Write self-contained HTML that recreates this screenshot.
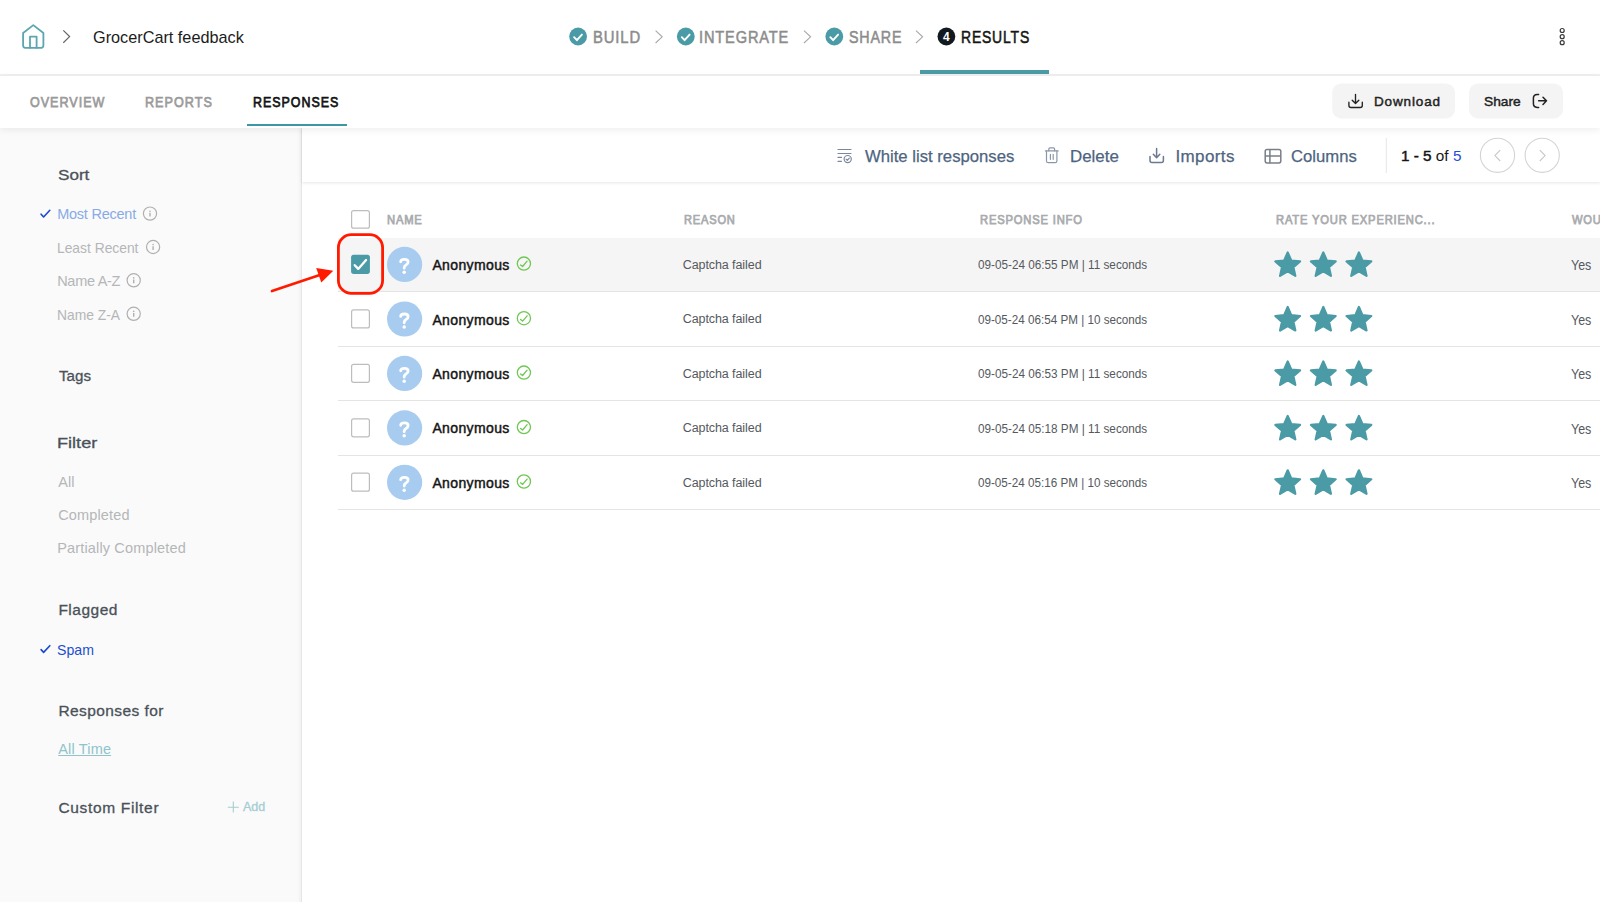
<!DOCTYPE html>
<html><head><meta charset="utf-8"><style>
html,body{margin:0;padding:0}
body{width:1600px;height:902px;overflow:hidden;position:relative;background:#fff;font-family:"Liberation Sans",sans-serif}
.t{position:absolute;white-space:nowrap;font-family:"Liberation Sans",sans-serif}
.ov{position:absolute;left:0;top:0}
</style></head><body>
<div style="position:absolute;left:0;top:74px;width:1600px;height:2px;background:#f0f0f0"></div>
<div style="position:absolute;left:920px;top:70px;width:128.5px;height:4px;background:#4a9ba5"></div>
<div style="position:absolute;left:0;top:128px;width:301px;height:774px;background:#fafafa;border-right:1px solid #e6e6e6;box-shadow:inset -5px 0 5px -5px rgba(0,0,0,0.07)"></div>
<div style="position:absolute;left:302px;top:128px;width:1298px;height:54px;background:#fff;box-shadow:0 1px 3px rgba(0,0,0,0.10)"></div>
<div style="position:absolute;left:0;top:76px;width:1600px;height:52px;background:#fff;box-shadow:0 2px 7px rgba(0,0,0,0.07)"></div>
<div style="position:absolute;left:247px;top:124px;width:100px;height:2px;background:#3d97a3"></div>
<div style="position:absolute;left:338px;top:238px;width:1262px;height:53px;background:#f5f5f5"></div><div style="position:absolute;left:338px;top:291px;width:1262px;height:1px;background:#e4e4e4"></div><div style="position:absolute;left:338px;top:346px;width:1262px;height:1px;background:#e4e4e4"></div><div style="position:absolute;left:338px;top:400px;width:1262px;height:1px;background:#e4e4e4"></div><div style="position:absolute;left:338px;top:455px;width:1262px;height:1px;background:#e4e4e4"></div><div style="position:absolute;left:338px;top:509px;width:1262px;height:1px;background:#e4e4e4"></div>
<svg class="ov" width="1600" height="902" viewBox="0 0 1600 902"><g fill="none" stroke="#5ba6b1" stroke-width="1.8" stroke-linejoin="round" stroke-linecap="round"><path d="M23.1 33 L33.3 25.1 L43.4 33 V45.6 Q43.4 47.8 41.2 47.8 H25.3 Q23.1 47.8 23.1 45.6 Z"/><path d="M30 47.8 V36.6 H36.6 V47.8"/></g><polyline points="63.3,30.4 69.6,36.6 63.3,42.8" fill="none" stroke="#5f6368" stroke-width="1.2"/><circle cx="578.1" cy="36.5" r="8.9" fill="#4a9ba5"/><polyline points="574.1,37.2 576.9,40.2 581.9,34.6" fill="none" stroke="#fff" stroke-width="1.9" stroke-linecap="round" stroke-linejoin="round"/><circle cx="685.8" cy="36.5" r="8.9" fill="#4a9ba5"/><polyline points="681.8,37.2 684.5999999999999,40.2 689.5999999999999,34.6" fill="none" stroke="#fff" stroke-width="1.9" stroke-linecap="round" stroke-linejoin="round"/><circle cx="834.3" cy="36.5" r="8.9" fill="#4a9ba5"/><polyline points="830.3,37.2 833.0999999999999,40.2 838.0999999999999,34.6" fill="none" stroke="#fff" stroke-width="1.9" stroke-linecap="round" stroke-linejoin="round"/><circle cx="946.4" cy="36.5" r="8.9" fill="#121a1f"/><text x="946.4" y="40.9" text-anchor="middle" font-family="Liberation Sans" font-weight="700" font-size="12" fill="#fff">4</text><polyline points="655.6,30.6 662.2,36.8 655.6,43" fill="none" stroke="#a8a8a8" stroke-width="1.1"/><polyline points="804,30.6 810.6,36.8 804,43" fill="none" stroke="#a8a8a8" stroke-width="1.1"/><polyline points="916,30.6 922.6,36.8 916,43" fill="none" stroke="#a8a8a8" stroke-width="1.1"/><circle cx="1562.2" cy="30.5" r="2" fill="none" stroke="#3a3a3a" stroke-width="1.2"/><circle cx="1562.2" cy="36.7" r="2" fill="none" stroke="#3a3a3a" stroke-width="1.2"/><circle cx="1562.2" cy="42.7" r="2" fill="none" stroke="#3a3a3a" stroke-width="1.2"/><rect x="1332.2" y="83.5" width="122.8" height="35" rx="9" fill="#f4f4f4"/><rect x="1469" y="83.5" width="94" height="35" rx="9" fill="#f4f4f4"/><g fill="none" stroke="#222" stroke-width="1.35" stroke-linecap="round" stroke-linejoin="round"><path d="M1355.5 94.3 V103.4 M1352.2 100.3 L1355.5 103.6 L1358.8 100.3"/><path d="M1348.9 102.2 V105.4 Q1348.9 107.5 1351 107.5 H1360.2 Q1362.3 107.5 1362.3 105.4 V102.2"/></g><g fill="none" stroke="#222" stroke-width="1.5" stroke-linecap="round" stroke-linejoin="round"><path d="M1538.6 94.4 H1537.2 Q1533.4 94.4 1533.4 98.2 V103.6 Q1533.4 107.4 1537.2 107.4 H1538.6"/><path d="M1538.6 100.8 H1546.3 M1543 97.3 L1546.5 100.8 L1543 104.4"/></g><g fill="none" stroke="#7b889c" stroke-width="1.2" stroke-linecap="round"><path d="M838 149.5 H851 M838 153.5 H851 M838 157.4 H841.5 M838 161.3 H841.5"/><circle cx="847.7" cy="159.1" r="3.6"/><polyline points="846.1,159.1 847.3,160.3 849.3,158.1" stroke-linejoin="round"/></g><g fill="none" stroke="#8a97a8" stroke-width="1.2" stroke-linecap="round" stroke-linejoin="round"><path d="M1048.8 150.8 V149.1 Q1048.8 147.8 1050.1 147.8 H1053.3 Q1054.6 147.8 1054.6 149.1 V150.8"/><path d="M1045.4 150.9 H1058.2"/><path d="M1046.5 151 V160.9 Q1046.5 162.7 1048.3 162.7 H1055.1 Q1056.9 162.7 1056.9 160.9 V151"/><path d="M1050.4 154.4 V159.3 M1053.2 154.4 V159.3"/></g><g fill="none" stroke="#6b7a90" stroke-width="1.5" stroke-linecap="round" stroke-linejoin="round"><path d="M1156.6 148.6 V157.6 M1153.3 154.3 L1156.6 157.7 L1159.8 154.3"/><path d="M1150 156.6 V160.5 Q1150 162.5 1152 162.5 H1161.4 Q1163.4 162.5 1163.4 160.5 V156.6"/></g><g fill="none" stroke="#7a7f88" stroke-width="1.5"><rect x="1265.2" y="149.5" width="15.6" height="13.4" rx="1.8"/><path d="M1269.9 149.5 V162.9 M1265.2 156.1 H1280.8"/></g><line x1="1386.3" y1="138" x2="1386.3" y2="173" stroke="#e6e6e6" stroke-width="1"/><circle cx="1497.5" cy="155.3" r="17.1" fill="#fff" stroke="#d4d4d4" stroke-width="1.1"/><circle cx="1542.2" cy="155.3" r="17.1" fill="#fff" stroke="#d4d4d4" stroke-width="1.1"/><polyline points="1500.2,150.2 1494.9,155.6 1500.2,161" fill="none" stroke="#c8c8c8" stroke-width="1.1"/><polyline points="1539.8,150.2 1545.1,155.6 1539.8,161" fill="none" stroke="#c8c8c8" stroke-width="1.1"/><rect x="351.6" y="210.6" width="17.8" height="17.6" rx="2" fill="#fff" stroke="#bdbdbd" stroke-width="1.2"/><rect x="351.1" y="254.7" width="18.8" height="19.2" rx="2.6" fill="#4a9ba5"/><polyline points="354.7,265.2 358.2,268.9 366.1,260" fill="none" stroke="#fff" stroke-width="2.3" stroke-linecap="round" stroke-linejoin="round"/><rect x="351.6" y="309.9" width="17.8" height="18" rx="2" fill="#fff" stroke="#bdbdbd" stroke-width="1.2"/><rect x="351.6" y="364.3" width="17.8" height="18" rx="2" fill="#fff" stroke="#bdbdbd" stroke-width="1.2"/><rect x="351.6" y="418.8" width="17.8" height="18" rx="2" fill="#fff" stroke="#bdbdbd" stroke-width="1.2"/><rect x="351.6" y="473.2" width="17.8" height="18" rx="2" fill="#fff" stroke="#bdbdbd" stroke-width="1.2"/><circle cx="404.6" cy="264.4" r="17.6" fill="#a8ccf0"/><path d="M400.7 261.80 Q400.7 259.40 404.4 259.40 Q408.1 259.40 408.1 262.10 Q408.1 263.90 406.0 265.00 Q404.2 265.90 404.2 267.80 V268.20" fill="none" stroke="#fff" stroke-width="2.8" stroke-linecap="round" stroke-linejoin="round"/><circle cx="404.2" cy="272.30" r="1.75" fill="#fff"/><circle cx="523.9" cy="263.6" r="6.6" fill="none" stroke="#6fc753" stroke-width="1.3"/><polyline points="520.6,264.9 522.6,266.5 527.1,261.2" fill="none" stroke="#6fc753" stroke-width="1.3" stroke-linecap="round" stroke-linejoin="round"/><polygon points="1287.70,252.40 1291.23,260.55 1300.06,261.38 1293.41,267.25 1295.34,275.92 1287.70,271.40 1280.06,275.92 1281.99,267.25 1275.34,261.38 1284.17,260.55" fill="#4a9ba5" stroke="#4a9ba5" stroke-width="2.2" stroke-linejoin="round"/><polygon points="1323.30,252.40 1326.83,260.55 1335.66,261.38 1329.01,267.25 1330.94,275.92 1323.30,271.40 1315.66,275.92 1317.59,267.25 1310.94,261.38 1319.77,260.55" fill="#4a9ba5" stroke="#4a9ba5" stroke-width="2.2" stroke-linejoin="round"/><polygon points="1358.90,252.40 1362.43,260.55 1371.26,261.38 1364.61,267.25 1366.54,275.92 1358.90,271.40 1351.26,275.92 1353.19,267.25 1346.54,261.38 1355.37,260.55" fill="#4a9ba5" stroke="#4a9ba5" stroke-width="2.2" stroke-linejoin="round"/><circle cx="404.6" cy="319.0" r="17.6" fill="#a8ccf0"/><path d="M400.7 316.40 Q400.7 314.00 404.4 314.00 Q408.1 314.00 408.1 316.70 Q408.1 318.50 406.0 319.60 Q404.2 320.50 404.2 322.40 V322.80" fill="none" stroke="#fff" stroke-width="2.8" stroke-linecap="round" stroke-linejoin="round"/><circle cx="404.2" cy="326.90" r="1.75" fill="#fff"/><circle cx="523.9" cy="318.2" r="6.6" fill="none" stroke="#6fc753" stroke-width="1.3"/><polyline points="520.6,319.5 522.6,321.1 527.1,315.8" fill="none" stroke="#6fc753" stroke-width="1.3" stroke-linecap="round" stroke-linejoin="round"/><polygon points="1287.70,307.00 1291.23,315.15 1300.06,315.98 1293.41,321.85 1295.34,330.52 1287.70,326.00 1280.06,330.52 1281.99,321.85 1275.34,315.98 1284.17,315.15" fill="#4a9ba5" stroke="#4a9ba5" stroke-width="2.2" stroke-linejoin="round"/><polygon points="1323.30,307.00 1326.83,315.15 1335.66,315.98 1329.01,321.85 1330.94,330.52 1323.30,326.00 1315.66,330.52 1317.59,321.85 1310.94,315.98 1319.77,315.15" fill="#4a9ba5" stroke="#4a9ba5" stroke-width="2.2" stroke-linejoin="round"/><polygon points="1358.90,307.00 1362.43,315.15 1371.26,315.98 1364.61,321.85 1366.54,330.52 1358.90,326.00 1351.26,330.52 1353.19,321.85 1346.54,315.98 1355.37,315.15" fill="#4a9ba5" stroke="#4a9ba5" stroke-width="2.2" stroke-linejoin="round"/><circle cx="404.6" cy="373.4" r="17.6" fill="#a8ccf0"/><path d="M400.7 370.80 Q400.7 368.40 404.4 368.40 Q408.1 368.40 408.1 371.10 Q408.1 372.90 406.0 374.00 Q404.2 374.90 404.2 376.80 V377.20" fill="none" stroke="#fff" stroke-width="2.8" stroke-linecap="round" stroke-linejoin="round"/><circle cx="404.2" cy="381.30" r="1.75" fill="#fff"/><circle cx="523.9" cy="372.6" r="6.6" fill="none" stroke="#6fc753" stroke-width="1.3"/><polyline points="520.6,373.9 522.6,375.5 527.1,370.2" fill="none" stroke="#6fc753" stroke-width="1.3" stroke-linecap="round" stroke-linejoin="round"/><polygon points="1287.70,361.40 1291.23,369.55 1300.06,370.38 1293.41,376.25 1295.34,384.92 1287.70,380.40 1280.06,384.92 1281.99,376.25 1275.34,370.38 1284.17,369.55" fill="#4a9ba5" stroke="#4a9ba5" stroke-width="2.2" stroke-linejoin="round"/><polygon points="1323.30,361.40 1326.83,369.55 1335.66,370.38 1329.01,376.25 1330.94,384.92 1323.30,380.40 1315.66,384.92 1317.59,376.25 1310.94,370.38 1319.77,369.55" fill="#4a9ba5" stroke="#4a9ba5" stroke-width="2.2" stroke-linejoin="round"/><polygon points="1358.90,361.40 1362.43,369.55 1371.26,370.38 1364.61,376.25 1366.54,384.92 1358.90,380.40 1351.26,384.92 1353.19,376.25 1346.54,370.38 1355.37,369.55" fill="#4a9ba5" stroke="#4a9ba5" stroke-width="2.2" stroke-linejoin="round"/><circle cx="404.6" cy="427.9" r="17.6" fill="#a8ccf0"/><path d="M400.7 425.30 Q400.7 422.90 404.4 422.90 Q408.1 422.90 408.1 425.60 Q408.1 427.40 406.0 428.50 Q404.2 429.40 404.2 431.30 V431.70" fill="none" stroke="#fff" stroke-width="2.8" stroke-linecap="round" stroke-linejoin="round"/><circle cx="404.2" cy="435.80" r="1.75" fill="#fff"/><circle cx="523.9" cy="427.1" r="6.6" fill="none" stroke="#6fc753" stroke-width="1.3"/><polyline points="520.6,428.4 522.6,430.0 527.1,424.7" fill="none" stroke="#6fc753" stroke-width="1.3" stroke-linecap="round" stroke-linejoin="round"/><polygon points="1287.70,415.90 1291.23,424.05 1300.06,424.88 1293.41,430.75 1295.34,439.42 1287.70,434.90 1280.06,439.42 1281.99,430.75 1275.34,424.88 1284.17,424.05" fill="#4a9ba5" stroke="#4a9ba5" stroke-width="2.2" stroke-linejoin="round"/><polygon points="1323.30,415.90 1326.83,424.05 1335.66,424.88 1329.01,430.75 1330.94,439.42 1323.30,434.90 1315.66,439.42 1317.59,430.75 1310.94,424.88 1319.77,424.05" fill="#4a9ba5" stroke="#4a9ba5" stroke-width="2.2" stroke-linejoin="round"/><polygon points="1358.90,415.90 1362.43,424.05 1371.26,424.88 1364.61,430.75 1366.54,439.42 1358.90,434.90 1351.26,439.42 1353.19,430.75 1346.54,424.88 1355.37,424.05" fill="#4a9ba5" stroke="#4a9ba5" stroke-width="2.2" stroke-linejoin="round"/><circle cx="404.6" cy="482.3" r="17.6" fill="#a8ccf0"/><path d="M400.7 479.70 Q400.7 477.30 404.4 477.30 Q408.1 477.30 408.1 480.00 Q408.1 481.80 406.0 482.90 Q404.2 483.80 404.2 485.70 V486.10" fill="none" stroke="#fff" stroke-width="2.8" stroke-linecap="round" stroke-linejoin="round"/><circle cx="404.2" cy="490.20" r="1.75" fill="#fff"/><circle cx="523.9" cy="481.5" r="6.6" fill="none" stroke="#6fc753" stroke-width="1.3"/><polyline points="520.6,482.8 522.6,484.4 527.1,479.1" fill="none" stroke="#6fc753" stroke-width="1.3" stroke-linecap="round" stroke-linejoin="round"/><polygon points="1287.70,470.30 1291.23,478.45 1300.06,479.28 1293.41,485.15 1295.34,493.82 1287.70,489.30 1280.06,493.82 1281.99,485.15 1275.34,479.28 1284.17,478.45" fill="#4a9ba5" stroke="#4a9ba5" stroke-width="2.2" stroke-linejoin="round"/><polygon points="1323.30,470.30 1326.83,478.45 1335.66,479.28 1329.01,485.15 1330.94,493.82 1323.30,489.30 1315.66,493.82 1317.59,485.15 1310.94,479.28 1319.77,478.45" fill="#4a9ba5" stroke="#4a9ba5" stroke-width="2.2" stroke-linejoin="round"/><polygon points="1358.90,470.30 1362.43,478.45 1371.26,479.28 1364.61,485.15 1366.54,493.82 1358.90,489.30 1351.26,493.82 1353.19,485.15 1346.54,479.28 1355.37,478.45" fill="#4a9ba5" stroke="#4a9ba5" stroke-width="2.2" stroke-linejoin="round"/><polyline points="41.1,214.2 43.6,217 49.8,210.3" fill="none" stroke="#1a4acc" stroke-width="1.6" stroke-linecap="round" stroke-linejoin="round"/><polyline points="41.1,649.6 43.6,652.4 49.8,645.7" fill="none" stroke="#1a4acc" stroke-width="1.6" stroke-linecap="round" stroke-linejoin="round"/><g><circle cx="150" cy="213.6" r="6.6" fill="none" stroke="#b0b0b0" stroke-width="1.2"/><circle cx="150" cy="211.2" r="0.8" fill="#b0b0b0"/><path d="M150 212.79999999999998 V216.6" stroke="#b0b0b0" stroke-width="1.4"/></g><g><circle cx="153.1" cy="247" r="6.6" fill="none" stroke="#b0b0b0" stroke-width="1.2"/><circle cx="153.1" cy="244.6" r="0.8" fill="#b0b0b0"/><path d="M153.1 246.2 V250" stroke="#b0b0b0" stroke-width="1.4"/></g><g><circle cx="133.7" cy="280.3" r="6.6" fill="none" stroke="#b0b0b0" stroke-width="1.2"/><circle cx="133.7" cy="277.90000000000003" r="0.8" fill="#b0b0b0"/><path d="M133.7 279.5 V283.3" stroke="#b0b0b0" stroke-width="1.4"/></g><g><circle cx="133.7" cy="313.8" r="6.6" fill="none" stroke="#b0b0b0" stroke-width="1.2"/><circle cx="133.7" cy="311.40000000000003" r="0.8" fill="#b0b0b0"/><path d="M133.7 313.0 V316.8" stroke="#b0b0b0" stroke-width="1.4"/></g><path d="M227.8 807.2 H238.8 M233.3 801.6 V812.6" stroke="#a3cdd2" stroke-width="1.1"/><rect x="338.4" y="234.6" width="44.2" height="58.8" rx="13" fill="none" stroke="#ff1a00" stroke-width="2.8"/><path d="M272 291 L322 274.3" stroke="#ff1a00" stroke-width="2.7" stroke-linecap="round"/><polygon points="316.2,268 333.3,270.8 321.3,282.6" fill="#ff1a00"/></svg>
<div class=t id="grocer" style="left:92.80px;top:27.81px;font-size:17px;line-height:19.55px;color:#1c1c1c;transform:scaleX(0.9557);transform-origin:0 0;">GrocerCart feedback</div>
<div class=t id="build" style="left:592.50px;top:28.01px;font-size:17px;line-height:19.55px;color:#8c8c8c;letter-spacing:1.000px;-webkit-text-stroke:0.55px #8c8c8c;transform:scaleX(0.8712);transform-origin:0 0;">BUILD</div>
<div class=t id="integ" style="left:699.40px;top:28.01px;font-size:17px;line-height:19.55px;color:#8c8c8c;letter-spacing:1.000px;-webkit-text-stroke:0.55px #8c8c8c;transform:scaleX(0.8586);transform-origin:0 0;">INTEGRATE</div>
<div class=t id="share" style="left:848.50px;top:28.01px;font-size:17px;line-height:19.55px;color:#8c8c8c;letter-spacing:1.000px;-webkit-text-stroke:0.55px #8c8c8c;transform:scaleX(0.8394);transform-origin:0 0;">SHARE</div>
<div class=t id="results" style="left:960.50px;top:28.01px;font-size:17px;line-height:19.55px;color:#151515;letter-spacing:1.000px;-webkit-text-stroke:0.55px #151515;transform:scaleX(0.8200);transform-origin:0 0;">RESULTS</div>
<div class=t id="overview" style="left:29.90px;top:92.81px;font-size:15px;line-height:17.25px;color:#9b9b9b;letter-spacing:1.200px;-webkit-text-stroke:0.75px #9b9b9b;transform:scaleX(0.8357);transform-origin:0 0;">OVERVIEW</div>
<div class=t id="reports" style="left:145.30px;top:92.81px;font-size:15px;line-height:17.25px;color:#9b9b9b;letter-spacing:1.200px;-webkit-text-stroke:0.75px #9b9b9b;transform:scaleX(0.8408);transform-origin:0 0;">REPORTS</div>
<div class=t id="responses" style="left:253.30px;top:92.81px;font-size:15px;line-height:17.25px;color:#141414;letter-spacing:1.200px;-webkit-text-stroke:0.75px #141414;transform:scaleX(0.8294);transform-origin:0 0;">RESPONSES</div>
<div class=t id="download" style="left:1374.00px;top:93.90px;font-size:13.5px;line-height:15.52px;color:#222222;letter-spacing:0.857px;-webkit-text-stroke:0.45px #222222;">Download</div>
<div class=t id="sharebtn" style="left:1484.00px;top:93.90px;font-size:13.5px;line-height:15.52px;color:#222222;-webkit-text-stroke:0.45px #222222;transform:scaleX(1.0177);transform-origin:0 0;">Share</div>
<div class=t id="wl" style="left:865.00px;top:146.51px;font-size:17px;line-height:19.55px;color:#4d6480;-webkit-text-stroke:0.25px #4d6480;transform:scaleX(0.9813);transform-origin:0 0;">White list responses</div>
<div class=t id="del" style="left:1070.20px;top:146.51px;font-size:17px;line-height:19.55px;color:#4d6480;-webkit-text-stroke:0.25px #4d6480;transform:scaleX(0.9934);transform-origin:0 0;">Delete</div>
<div class=t id="imp" style="left:1175.40px;top:146.51px;font-size:17px;line-height:19.55px;color:#4d6480;letter-spacing:0.400px;-webkit-text-stroke:0.25px #4d6480;">Imports</div>
<div class=t id="cols" style="left:1291.00px;top:146.51px;font-size:17px;line-height:19.55px;color:#4d6480;-webkit-text-stroke:0.25px #4d6480;transform:scaleX(0.9803);transform-origin:0 0;">Columns</div>
<div class=t id="pag" style="left:1400.60px;top:147.01px;font-size:15px;line-height:17.25px;color:#151515;transform:scaleX(1.0197);transform-origin:0 0;"><span style="-webkit-text-stroke:0.45px #151515">1 - 5</span> of <span style="color:#1d4fd6">5</span></div>
<div class=t id="hname" style="left:387.00px;top:212.82px;font-size:12.5px;line-height:14.37px;color:#a9abae;letter-spacing:0.900px;-webkit-text-stroke:0.75px #a9abae;transform:scaleX(0.8974);transform-origin:0 0;">NAME</div>
<div class=t id="hreason" style="left:683.70px;top:212.82px;font-size:12.5px;line-height:14.37px;color:#a9abae;letter-spacing:0.900px;-webkit-text-stroke:0.75px #a9abae;transform:scaleX(0.8868);transform-origin:0 0;">REASON</div>
<div class=t id="hinfo" style="left:979.70px;top:212.82px;font-size:12.5px;line-height:14.37px;color:#a9abae;letter-spacing:0.900px;-webkit-text-stroke:0.75px #a9abae;transform:scaleX(0.8975);transform-origin:0 0;">RESPONSE INFO</div>
<div class=t id="hrate" style="left:1275.60px;top:212.82px;font-size:12.5px;line-height:14.37px;color:#a9abae;letter-spacing:0.900px;-webkit-text-stroke:0.75px #a9abae;transform:scaleX(0.8967);transform-origin:0 0;">RATE YOUR EXPERIENC...</div>
<div class=t id="hwou" style="left:1572.00px;top:212.82px;font-size:12.5px;line-height:14.37px;color:#a9abae;letter-spacing:0.900px;-webkit-text-stroke:0.75px #a9abae;transform:scaleX(0.8950);transform-origin:0 0;">WOULD YOU</div>
<div class=t id="anon0" style="left:432.40px;top:256.91px;font-size:14px;line-height:16.1px;color:#141414;letter-spacing:0.375px;-webkit-text-stroke:0.45px #141414;">Anonymous</div>
<div class=t id="cap0" style="left:682.70px;top:257.60px;font-size:12.5px;line-height:14.37px;color:#55595e;letter-spacing:-0.077px;">Captcha failed</div>
<div class=t id="info0" style="left:978.40px;top:258.10px;font-size:12.5px;line-height:14.37px;color:#55595e;transform:scaleX(0.9389);transform-origin:0 0;">09-05-24 06:55 PM | 11 seconds</div>
<div class=t id="yes0" style="left:1571.00px;top:257.00px;font-size:14.5px;line-height:16.67px;color:#55595e;transform:scaleX(0.8577);transform-origin:0 0;">Yes</div>
<div class=t id="anon1" style="left:432.40px;top:311.51px;font-size:14px;line-height:16.1px;color:#141414;letter-spacing:0.375px;-webkit-text-stroke:0.45px #141414;">Anonymous</div>
<div class=t id="cap1" style="left:682.70px;top:312.22px;font-size:12.5px;line-height:14.37px;color:#55595e;letter-spacing:-0.077px;">Captcha failed</div>
<div class=t id="info1" style="left:978.40px;top:312.72px;font-size:12.5px;line-height:14.37px;color:#55595e;transform:scaleX(0.9337);transform-origin:0 0;">09-05-24 06:54 PM | 10 seconds</div>
<div class=t id="yes1" style="left:1571.00px;top:311.60px;font-size:14.5px;line-height:16.67px;color:#55595e;transform:scaleX(0.8577);transform-origin:0 0;">Yes</div>
<div class=t id="anon2" style="left:432.40px;top:365.91px;font-size:14px;line-height:16.1px;color:#141414;letter-spacing:0.375px;-webkit-text-stroke:0.45px #141414;">Anonymous</div>
<div class=t id="cap2" style="left:682.70px;top:366.60px;font-size:12.5px;line-height:14.37px;color:#55595e;letter-spacing:-0.077px;">Captcha failed</div>
<div class=t id="info2" style="left:978.40px;top:367.10px;font-size:12.5px;line-height:14.37px;color:#55595e;transform:scaleX(0.9389);transform-origin:0 0;">09-05-24 06:53 PM | 11 seconds</div>
<div class=t id="yes2" style="left:1571.00px;top:366.00px;font-size:14.5px;line-height:16.67px;color:#55595e;transform:scaleX(0.8577);transform-origin:0 0;">Yes</div>
<div class=t id="anon3" style="left:432.40px;top:420.41px;font-size:14px;line-height:16.1px;color:#141414;letter-spacing:0.375px;-webkit-text-stroke:0.45px #141414;">Anonymous</div>
<div class=t id="cap3" style="left:682.70px;top:421.10px;font-size:12.5px;line-height:14.37px;color:#55595e;letter-spacing:-0.077px;">Captcha failed</div>
<div class=t id="info3" style="left:978.40px;top:421.60px;font-size:12.5px;line-height:14.37px;color:#55595e;transform:scaleX(0.9389);transform-origin:0 0;">09-05-24 05:18 PM | 11 seconds</div>
<div class=t id="yes3" style="left:1571.00px;top:420.50px;font-size:14.5px;line-height:16.67px;color:#55595e;transform:scaleX(0.8577);transform-origin:0 0;">Yes</div>
<div class=t id="anon4" style="left:432.40px;top:474.81px;font-size:14px;line-height:16.1px;color:#141414;letter-spacing:0.375px;-webkit-text-stroke:0.45px #141414;">Anonymous</div>
<div class=t id="cap4" style="left:682.70px;top:475.51px;font-size:12.5px;line-height:14.37px;color:#55595e;letter-spacing:-0.077px;">Captcha failed</div>
<div class=t id="info4" style="left:978.40px;top:476.01px;font-size:12.5px;line-height:14.37px;color:#55595e;transform:scaleX(0.9337);transform-origin:0 0;">09-05-24 05:16 PM | 10 seconds</div>
<div class=t id="yes4" style="left:1571.00px;top:474.90px;font-size:14.5px;line-height:16.67px;color:#55595e;transform:scaleX(0.8577);transform-origin:0 0;">Yes</div>
<div class=t id="sort" style="left:58.40px;top:166.40px;font-size:15.5px;line-height:17.82px;color:#4a5159;-webkit-text-stroke:0.3px #4a5159;transform:scaleX(1.1031);transform-origin:0 0;">Sort</div>
<div class=t id="most" style="left:57.20px;top:206.32px;font-size:14.5px;line-height:16.67px;color:#88aae6;letter-spacing:-0.240px;">Most Recent</div>
<div class=t id="least" style="left:57.40px;top:239.72px;font-size:14.5px;line-height:16.67px;color:#b4b6b8;transform:scaleX(0.9532);transform-origin:0 0;">Least Recent</div>
<div class=t id="naz" style="left:57.20px;top:272.90px;font-size:14.5px;line-height:16.67px;color:#b4b6b8;letter-spacing:-0.286px;">Name A-Z</div>
<div class=t id="nza" style="left:57.40px;top:306.50px;font-size:14.5px;line-height:16.67px;color:#b4b6b8;transform:scaleX(0.9548);transform-origin:0 0;">Name Z-A</div>
<div class=t id="tags" style="left:59.40px;top:366.72px;font-size:15.5px;line-height:17.82px;color:#4a5159;-webkit-text-stroke:0.3px #4a5159;transform:scaleX(0.9755);transform-origin:0 0;">Tags</div>
<div class=t id="filter" style="left:57.40px;top:434.40px;font-size:15.5px;line-height:17.82px;color:#4a5159;-webkit-text-stroke:0.3px #4a5159;transform:scaleX(1.1693);transform-origin:0 0;">Filter</div>
<div class=t id="all" style="left:58.20px;top:474.40px;font-size:14.5px;line-height:16.67px;color:#b4b6b8;letter-spacing:0.100px;">All</div>
<div class=t id="comp" style="left:58.20px;top:507.32px;font-size:14.5px;line-height:16.67px;color:#b4b6b8;letter-spacing:0.150px;">Completed</div>
<div class=t id="pcomp" style="left:57.20px;top:540.40px;font-size:14.5px;line-height:16.67px;color:#b4b6b8;letter-spacing:0.156px;">Partially Completed</div>
<div class=t id="flag" style="left:58.40px;top:601.32px;font-size:15.5px;line-height:17.82px;color:#4a5159;letter-spacing:0.500px;-webkit-text-stroke:0.3px #4a5159;">Flagged</div>
<div class=t id="spam" style="left:57.40px;top:641.60px;font-size:14.5px;line-height:16.67px;color:#1d4ed0;transform:scaleX(0.9739);transform-origin:0 0;">Spam</div>
<div class=t id="respfor" style="left:58.40px;top:702.32px;font-size:15.5px;line-height:17.82px;color:#4a5159;letter-spacing:0.417px;-webkit-text-stroke:0.3px #4a5159;">Responses for</div>
<div class=t id="alltime" style="left:58.20px;top:741.04px;font-size:14.5px;line-height:16.67px;color:#8fc4ca;font-weight:400;letter-spacing:0.171px;text-decoration:underline;">All Time</div>
<div class=t id="custom" style="left:58.40px;top:798.90px;font-size:15.5px;line-height:17.82px;color:#4a5159;letter-spacing:0.667px;-webkit-text-stroke:0.3px #4a5159;">Custom Filter</div>
<div class=t id="add" style="left:243.00px;top:800.01px;font-size:12.5px;line-height:14.37px;color:#a3cdd2;-webkit-text-stroke:0.3px #a3cdd2;">Add</div>
</body></html>
